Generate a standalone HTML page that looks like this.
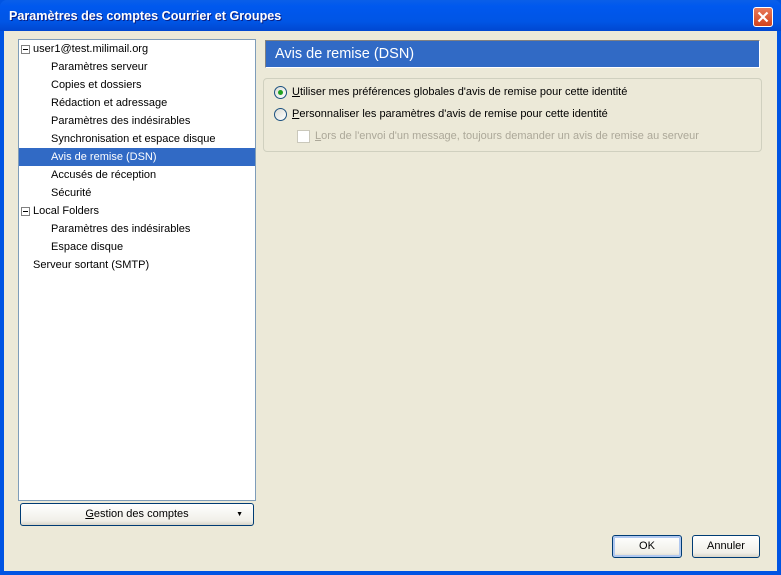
<!DOCTYPE html>
<html><head><meta charset="utf-8"><style>
*{margin:0;padding:0;box-sizing:border-box}
body{width:781px;height:575px;overflow:hidden;background:#0054e3;font-family:"Liberation Sans",sans-serif;font-size:11px;color:#000;position:relative}
.title{position:absolute;left:0;top:0;width:781px;height:31px;background:linear-gradient(#0a5fe8,#0058ee 20%,#0055e5 70%,#0047d0);border-radius:7px 7px 0 0}
.title span{position:absolute;left:9px;top:9px;color:#fff;font-weight:bold;font-size:12.6px;text-shadow:1px 1px #0a1e80}
.close{position:absolute;left:753px;top:7px;width:20px;height:20px;border:1px solid #fff;border-radius:3px;background:linear-gradient(#e87a5a,#d2421c)}
.body{position:absolute;left:4px;top:31px;width:773px;height:540px;background:#ece9d8}
.abs{position:absolute}
.tree{left:18px;top:39px;width:238px;height:462px;background:#fff;border:1px solid #7f9db9}
.row{position:absolute;height:18px;line-height:18px;white-space:nowrap}
.sel{left:19px;width:236px;background:#316ac5;color:#fff}
.minus{position:absolute;width:9px;height:9px;border:1px solid #808080;background:#fff}
.minus:after{content:"";position:absolute;left:1px;top:3px;width:5px;height:1px;background:#000}
.hdr{left:265px;top:40px;width:495px;height:28px;background:#316ac5;border:1px solid #808080;border-right-color:#fff;border-bottom-color:#fff;color:#fff;font-size:14.5px;line-height:26px;padding-left:9px}
.grp{left:263px;top:78px;width:499px;height:74px;border:1px solid #d0d0bf;border-radius:4px}
.radio{position:absolute;width:13px;height:13px;border-radius:50%;border:1px solid #1c5180;background:linear-gradient(135deg,#dcdcd4,#fff)}
.dot{position:absolute;left:3px;top:3px;width:5px;height:5px;border-radius:50%;background:#21a121}
.btn{position:absolute;border:1px solid #003c74;border-radius:3px;background:linear-gradient(#fff,#f0efe8 80%,#d8d4c8);text-align:center;line-height:21px}
u{text-decoration:underline}
</style></head><body>
<div class="title"><span>Paramètres des comptes Courrier et Groupes</span>
<div class="close"><svg width="18" height="18" viewBox="0 0 18 18"><path d="M4.5 4.5L13.5 13.5M13.5 4.5L4.5 13.5" stroke="#fff" stroke-width="2.2"/></svg></div></div>
<div class="body"></div>
<div class="abs tree"></div>
<div class="minus" style="left:21px;top:45px"></div>
<div class="row" style="left:33px;top:40px">user1@test.milimail.org</div>
<div class="row" style="left:51px;top:58px">Paramètres serveur</div>
<div class="row" style="left:51px;top:76px">Copies et dossiers</div>
<div class="row" style="left:51px;top:94px">Rédaction et adressage</div>
<div class="row" style="left:51px;top:112px">Paramètres des indésirables</div>
<div class="row" style="left:51px;top:130px">Synchronisation et espace disque</div>
<div class="row sel" style="top:148px;padding-left:32px">Avis de remise (DSN)</div>
<div class="row" style="left:51px;top:166px">Accusés de réception</div>
<div class="row" style="left:51px;top:184px">Sécurité</div>
<div class="minus" style="left:21px;top:207px"></div>
<div class="row" style="left:33px;top:202px">Local Folders</div>
<div class="row" style="left:51px;top:220px">Paramètres des indésirables</div>
<div class="row" style="left:51px;top:238px">Espace disque</div>
<div class="row" style="left:33px;top:256px">Serveur sortant (SMTP)</div>
<div class="abs hdr">Avis de remise (DSN)</div>
<div class="abs grp"></div>
<div class="radio" style="left:274px;top:86px"><div class="dot"></div></div>
<div class="row" style="left:292px;top:83px"><u>U</u>tiliser mes préférences globales d'avis de remise pour cette identité</div>
<div class="radio" style="left:274px;top:108px"></div>
<div class="row" style="left:292px;top:105px"><u>P</u>ersonnaliser les paramètres d'avis de remise pour cette identité</div>
<div class="abs" style="left:297px;top:130px;width:13px;height:13px;border:1px solid #cac8bb;background:#fff"></div>
<div class="row" style="left:315px;top:127px;color:#aca899"><u>L</u>ors de l'envoi d'un message, toujours demander un avis de remise au serveur</div>
<div class="btn" style="left:20px;top:503px;width:234px;height:23px"><u>G</u>estion des comptes<span style="position:absolute;right:10px;top:0;font-size:7px">▼</span></div>
<div class="btn" style="left:612px;top:535px;width:70px;height:23px;box-shadow:inset 0 0 0 2px #b0c8f0">OK</div>
<div class="btn" style="left:692px;top:535px;width:68px;height:23px">Annuler</div>
</body></html>
